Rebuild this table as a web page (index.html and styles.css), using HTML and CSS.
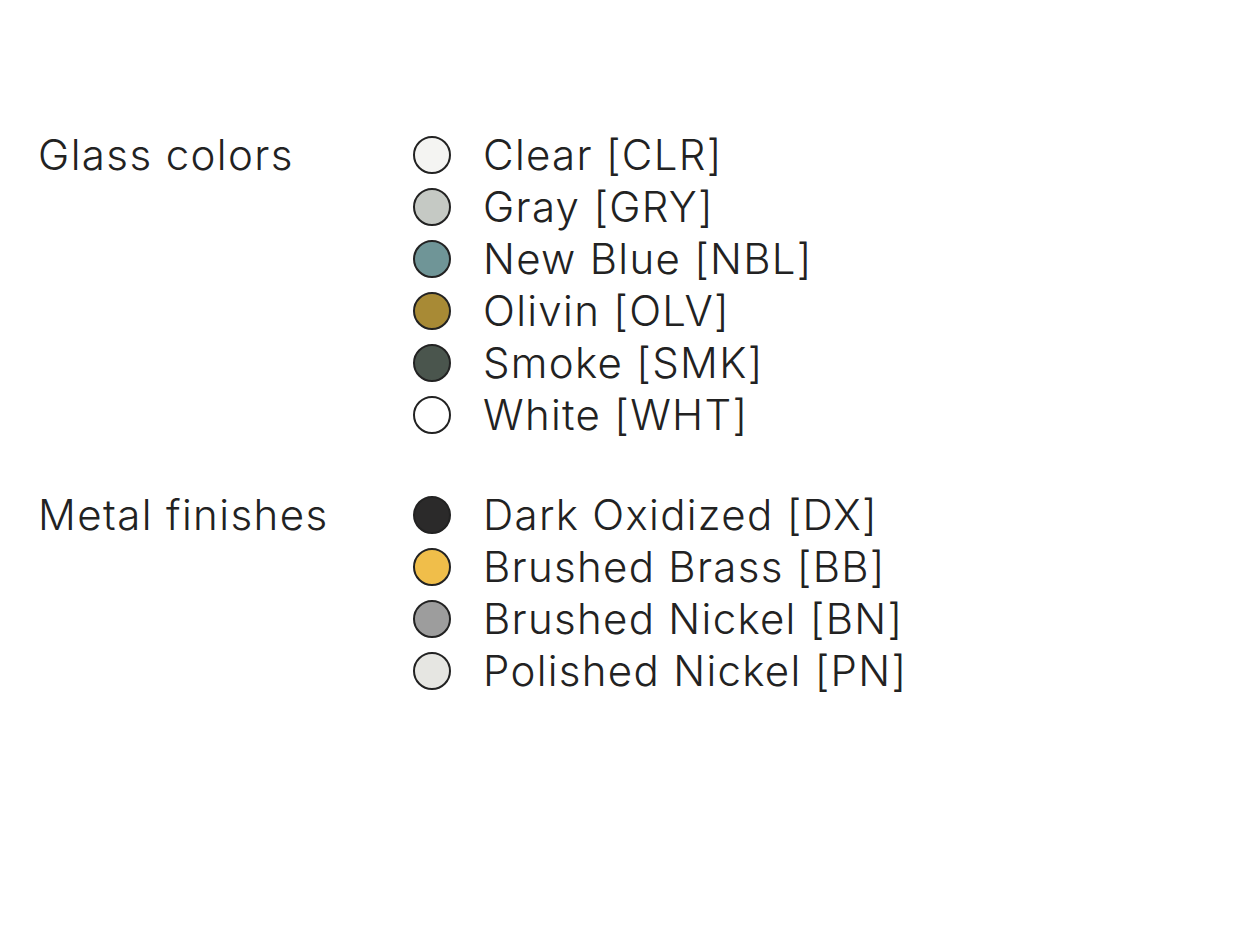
FILE: index.html
```html
<!DOCTYPE html>
<html lang="en">
<head>
<meta charset="utf-8">
<title>Finishes</title>
<link rel="stylesheet" href="styles.css">
</head>
<body>
<main class="options">
  <section class="group">
    <h2 class="group-title">Glass colors</h2>
    <ul class="swatches">
      <li class="swatch"><span class="dot clr"></span><span class="name">Clear [CLR]</span></li>
      <li class="swatch"><span class="dot gry"></span><span class="name">Gray [GRY]</span></li>
      <li class="swatch"><span class="dot nbl"></span><span class="name">New Blue [NBL]</span></li>
      <li class="swatch"><span class="dot olv"></span><span class="name">Olivin [OLV]</span></li>
      <li class="swatch"><span class="dot smk"></span><span class="name">Smoke [SMK]</span></li>
      <li class="swatch"><span class="dot wht"></span><span class="name">White [WHT]</span></li>
    </ul>
  </section>
  <section class="group">
    <h2 class="group-title">Metal finishes</h2>
    <ul class="swatches">
      <li class="swatch"><span class="dot dx"></span><span class="name">Dark Oxidized [DX]</span></li>
      <li class="swatch"><span class="dot bb"></span><span class="name">Brushed Brass [BB]</span></li>
      <li class="swatch"><span class="dot bn"></span><span class="name">Brushed Nickel [BN]</span></li>
      <li class="swatch"><span class="dot pn"></span><span class="name">Polished Nickel [PN]</span></li>
    </ul>
  </section>
</main>
</body>
</html>
```
FILE: styles.css
```css
html, body {
  margin: 0;
  padding: 0;
  background: #ffffff;
}
body {
  font-family: "Inter", "Liberation Sans", sans-serif;
  font-weight: 300;
  color: #222222;
}
.options {
  display: flex;
  flex-direction: column;
  gap: 48px;
  padding: 129px 0 0 38px;
}
.group {
  display: grid;
  grid-template-columns: 375px auto;
  align-items: start;
}
.group-title {
  margin: 0;
  font-size: 42px;
  font-weight: 300;
  line-height: 52px;
  letter-spacing: 1.4px;
}
.swatches {
  list-style: none;
  margin: 0;
  padding: 0;
}
.swatch {
  display: flex;
  align-items: center;
  gap: 32px;
  height: 52px;
  font-size: 42px;
  line-height: 52px;
  letter-spacing: 1.3px;
}
.dot {
  width: 34px;
  height: 34px;
  border: 2px solid #222;
  border-radius: 50%;
  flex: none;
}
.clr { background: #f4f4f2; }
.gry { background: #c5c9c4; }
.nbl { background: #6f9597; }
.olv { background: #a88a35; }
.smk { background: #4a554d; }
.wht { background: #ffffff; }
.dx { background: #2b2a2a; }
.bb { background: #f0be4a; }
.bn { background: #9d9d9d; }
.pn { background: #e6e6e2; }
```
